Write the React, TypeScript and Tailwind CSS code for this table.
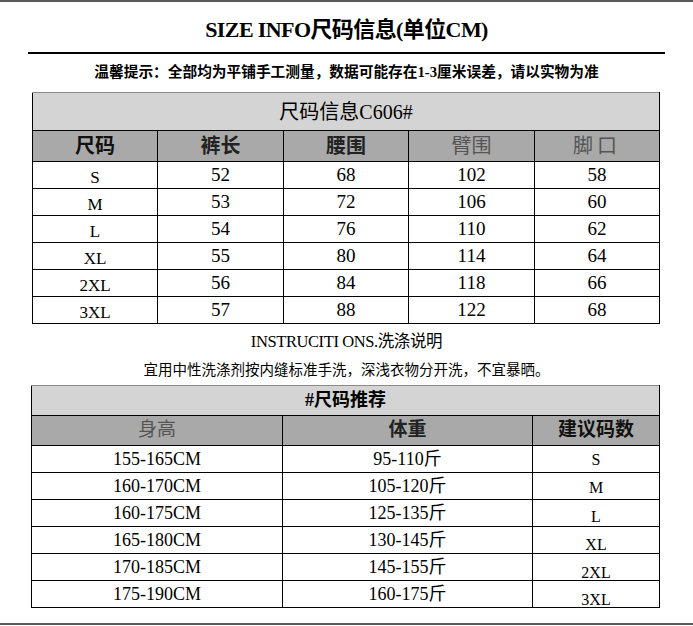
import React from "react";

const serif = { fontFamily: '"Liberation Serif", "Noto Sans CJK SC", serif' };

const sizeRows = [
  ["S", "52", "68", "102", "58"],
  ["M", "53", "72", "106", "60"],
  ["L", "54", "76", "110", "62"],
  ["XL", "55", "80", "114", "64"],
  ["2XL", "56", "84", "118", "66"],
  ["3XL", "57", "88", "122", "68"],
];

const recRows = [
  ["155-165CM", "95-110斤", "S"],
  ["160-170CM", "105-120斤", "M"],
  ["160-175CM", "125-135斤", "L"],
  ["165-180CM", "130-145斤", "XL"],
  ["170-185CM", "145-155斤", "2XL"],
  ["175-190CM", "160-175斤", "3XL"],
];

const recShift = [
  "translate-y-[1px]",
  "translate-y-[2px]",
  "translate-y-[4px]",
  "translate-y-[5px]",
  "translate-y-[6px]",
  "translate-y-[6px]",
];

export default function App() {
  return (
    <div className="w-[693px] h-[626px] bg-white relative overflow-hidden text-black" style={serif}>
      <div className="h-[2px] bg-[#5a5a5a]" />
      <div className="h-[50px] flex items-center justify-center pt-[4px]">
        <span className="text-[22px] font-bold tracking-[-0.6px]">SIZE INFO尺码信息(单位CM)</span>
      </div>
      <div className="mx-[28px] h-[2px] bg-black" />
      <div className="h-[38px] flex items-center justify-center pb-[2px]">
        <span className="text-[14.7px] font-bold">温馨提示：全部均为平铺手工测量，数据可能存在1-3厘米误差，请以实物为准</span>
      </div>
      <div className="mx-[32px]">
        <table className="w-[627px] border-collapse table-fixed">
          <colgroup>
            <col className="w-[125px]" />
            <col className="w-[126px]" />
            <col className="w-[125px]" />
            <col className="w-[126px]" />
            <col className="w-[125px]" />
          </colgroup>
          <tbody>
            <tr className="h-[38px] bg-[#d4d4d4]">
              <td colSpan={5} className="border border-black border-t-[#8a8a8a] text-center text-[20px] p-0">
                尺码信息C606#
              </td>
            </tr>
            <tr className="h-[31px] bg-[#a9a9a9]">
              <td className="border border-black text-center text-[20px] font-bold p-0 text-[#111]">尺码</td>
              <td className="border border-black text-center text-[20px] font-bold p-0 text-[#222]">裤长</td>
              <td className="border border-black text-center text-[20px] font-bold p-0 text-[#222]">腰围</td>
              <td className="border border-black text-center text-[20px] p-0 text-[#555]">臂围</td>
              <td className="border border-black text-center text-[20px] p-0 text-[#555] tracking-[4px]">脚口</td>
            </tr>
            {sizeRows.map((r) => (
              <tr key={r[0]} className="h-[27px]">
                <td className="border border-black text-center text-[17px] p-0 leading-[20px]">
                  <span className="inline-block translate-y-[3px]">{r[0]}</span>
                </td>
                {r.slice(1).map((c, i) => (
                  <td key={i} className="border border-black text-center text-[19px] p-0 leading-[20px]">{c}</td>
                ))}
              </tr>
            ))}
          </tbody>
        </table>
      </div>
      <div className="h-[36px] flex items-center justify-center">
        <span className="text-[16.5px] tracking-[-0.4px]">INSTRUCITI ONS.洗涤说明</span>
      </div>
      <div className="h-[25px] flex items-start justify-center">
        <span className="text-[14.5px]">宜用中性洗涤剂按内缝标准手洗，深浅衣物分开洗，不宜暴晒。</span>
      </div>
      <div className="mx-[31px]">
        <table className="w-[628px] border-collapse table-fixed">
          <colgroup>
            <col className="w-[251px]" />
            <col className="w-[250px]" />
            <col className="w-[127px]" />
          </colgroup>
          <tbody>
            <tr className="h-[30px] bg-[#d4d4d4]">
              <td colSpan={3} className="border border-black border-t-[#8a8a8a] text-center text-[18px] font-bold p-0">
                #尺码推荐
              </td>
            </tr>
            <tr className="h-[28px] bg-[#a9a9a9]">
              <td className="border border-black text-center text-[19px] p-0 text-[#555]">身高</td>
              <td className="border border-black text-center text-[19px] font-bold p-0 text-[#222]">体重</td>
              <td className="border border-black text-center text-[19px] font-bold p-0 text-[#111]">建议码数</td>
            </tr>
            {recRows.map((r, idx) => (
              <tr key={r[0]} className="h-[27px]">
                <td className="border border-black text-center text-[18px] p-0 leading-[20px]">{r[0]}</td>
                <td className="border border-black text-center text-[18px] p-0 leading-[20px]">{r[1]}</td>
                <td className="border border-black text-center text-[16px] p-0 leading-[18px]">
                  <span className={"inline-block " + recShift[idx]}>{r[2]}</span>
                </td>
              </tr>
            ))}
          </tbody>
        </table>
      </div>
      <div className="absolute left-0 right-0 top-[623px] h-[2px] bg-[#5a5a5a]" />
    </div>
  );
}
